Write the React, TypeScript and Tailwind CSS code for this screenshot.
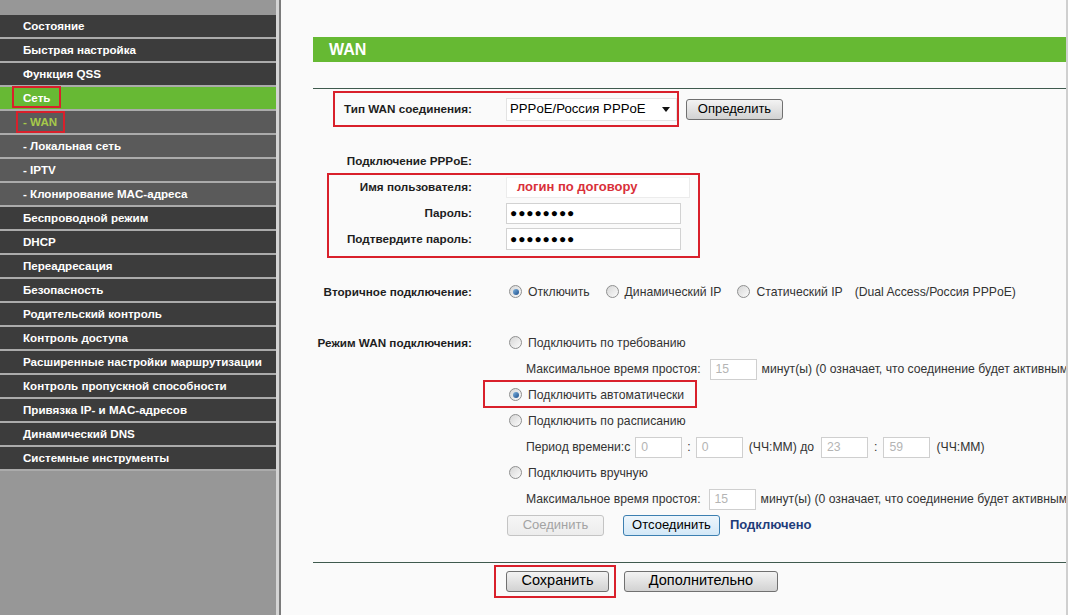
import React from 'react';

type MenuItem = { label: string; kind?: 'active' | 'sub' | 'subActive' };

const menu: MenuItem[] = [
  { label: 'Состояние' },
  { label: 'Быстрая настройка' },
  { label: 'Функция QSS' },
  { label: 'Сеть', kind: 'active' },
  { label: '- WAN', kind: 'subActive' },
  { label: '- Локальная сеть', kind: 'sub' },
  { label: '- IPTV', kind: 'sub' },
  { label: '- Клонирование MAC-адреса', kind: 'sub' },
  { label: 'Беспроводной режим' },
  { label: 'DHCP' },
  { label: 'Переадресация' },
  { label: 'Безопасность' },
  { label: 'Родительский контроль' },
  { label: 'Контроль доступа' },
  { label: 'Расширенные настройки маршрутизации' },
  { label: 'Контроль пропускной способности' },
  { label: 'Привязка IP- и MAC-адресов' },
  { label: 'Динамический DNS' },
  { label: 'Системные инструменты' },
];

function Sidebar() {
  return (
    <div className="w-[276px] shrink-0 bg-[#979797] pt-[15px]">
      {menu.map((m) => {
        const bg =
          m.kind === 'active' ? 'bg-[#67b934]' : m.kind === 'sub' || m.kind === 'subActive' ? 'bg-[#5a5a5a]' : 'bg-[#3c3c3c]';
        const color = m.kind === 'subActive' ? 'text-[#a6c94a]' : 'text-white';
        return (
          <div key={m.label} className="border-b-2 border-[#ababab]">
            <div className={`h-[22px] flex items-center pl-[23px] text-[11.6px] font-bold ${bg} ${color}`}>{m.label}</div>
          </div>
        );
      })}
    </div>
  );
}

function Radio({ checked = false }: { checked?: boolean }) {
  return (
    <span className="w-[13px] h-[13px] rounded-full border border-[#8e8f8f] bg-gradient-to-br from-[#d6d6d6] to-[#fbfbfb] flex items-center justify-center shrink-0">
      {checked && <span className="w-[6px] h-[6px] rounded-full bg-gradient-to-br from-[#7fb4e0] to-[#1d4f8c]" />}
    </span>
  );
}

function RadioLabel({ checked, children }: { checked?: boolean; children: React.ReactNode }) {
  return (
    <span className="flex items-center gap-[6px]">
      <Radio checked={checked} />
      <span>{children}</span>
    </span>
  );
}

function Button({
  children,
  w,
  variant = 'normal',
  size = 'text-[13px]',
}: {
  children: React.ReactNode;
  w: string;
  variant?: 'normal' | 'disabled' | 'focus';
  size?: string;
}) {
  const cls =
    variant === 'disabled'
      ? 'border-[#c4c4c4] text-[#a3a3a3] from-[#f6f6f6] to-[#ececec]'
      : variant === 'focus'
        ? 'border-[#3c7fb1] text-black from-[#eef6fc] to-[#d3e8f7]'
        : 'border-[#707070] text-black from-[#f3f3f3] to-[#d2d2d2]';
  return (
    <span className={`${w} h-[21px] rounded-[3px] border bg-gradient-to-b flex items-center justify-center ${size} ${cls}`}>
      {children}
    </span>
  );
}

function SmallInput({ value, w = 'w-[47px]' }: { value: string; w?: string }) {
  return (
    <span className={`${w} h-[21px] border border-[#cfcfcf] bg-white flex items-center pl-[5px] text-[12.2px] text-[#b4b4b4] shrink-0`}>
      {value}
    </span>
  );
}

function Row({ label, children, className = '' }: { label?: string; children?: React.ReactNode; className?: string }) {
  return (
    <div className={`flex h-[26px] items-center ${className}`}>
      <div className="w-[159px] shrink-0 text-right text-[11.7px] font-bold text-[#1e1e1e]">{label}</div>
      <div className="ml-[34px] flex items-center whitespace-nowrap text-[12.2px] text-[#333]">{children}</div>
    </div>
  );
}

const dots = '●●●●●●●●';

function Main() {
  return (
    <div className="w-[785px] shrink-0 overflow-hidden bg-[#fafafa]">
      <div className="w-[753px] ml-[32px] pt-[37px]">
        <div className="h-[25px] bg-[#66b933] pl-[16px] flex items-center text-white font-bold text-[16px]">WAN</div>
        <div className="mt-[26px] border-t border-[#3f5a4e]" />

        <Row label="Тип WAN соединения:" className="mt-[7px]">
          <span className="w-[171px] h-[23px] border border-[#e3e3e3] bg-white flex items-center justify-between pl-[3px] pr-[6px] text-[13.2px] text-black">
            <span>PPPoE/Россия PPPoE</span>
            <svg width="8" height="5" viewBox="0 0 8 5"><path d="M0 0h8L4 5z" fill="#111" /></svg>
          </span>
          <span className="ml-[9px]">
            <Button w="w-[97px]">Определить</Button>
          </span>
        </Row>

        <Row label="Подключение PPPoE:" className="mt-[26px]" />
        <Row label="Имя пользователя:">
          <span className="w-[184px] h-[21px] border border-[#ececec] border-t-[#f4f4f4] bg-white flex items-center pl-[10px] text-[13px] font-bold text-[#d9303a]">
            логин по договору
          </span>
        </Row>
        <Row label="Пароль:">
          <span className="w-[175px] h-[21px] border border-[#d2d2d2] bg-white flex items-center pl-[3px] text-[12px] tracking-[0.9px] text-black">
            {dots}
          </span>
        </Row>
        <Row label="Подтвердите пароль:">
          <span className="w-[175px] h-[22px] border border-[#d2d2d2] bg-white flex items-center pl-[3px] text-[12px] tracking-[0.9px] text-black">
            {dots}
          </span>
        </Row>

        <Row label="Вторичное подключение:" className="mt-[27px]">
          <span className="ml-[3px] flex items-center gap-[16px]">
            <RadioLabel checked>Отключить</RadioLabel>
            <RadioLabel>Динамический IP</RadioLabel>
            <RadioLabel>Статический IP</RadioLabel>
            <span className="-ml-[4px]">(Dual Access/Россия PPPoE)</span>
          </span>
        </Row>

        <Row label="Режим WAN подключения:" className="mt-[25px]">
          <span className="ml-[3px]">
            <RadioLabel>Подключить по требованию</RadioLabel>
          </span>
        </Row>
        <Row>
          <span className="ml-[20px] flex items-center">
            Максимальное время простоя:
            <span className="ml-[9px]">
              <SmallInput value="15" />
            </span>
            <span className="ml-[5px]">минут(ы) (0 означает, что соединение будет активным всегда)</span>
          </span>
        </Row>
        <Row>
          <span className="ml-[3px]">
            <RadioLabel checked>Подключить автоматически</RadioLabel>
          </span>
        </Row>
        <Row>
          <span className="ml-[3px]">
            <RadioLabel>Подключить по расписанию</RadioLabel>
          </span>
        </Row>
        <Row>
          <span className="ml-[20px] flex items-center">
            Период времени:с
            <span className="ml-[5px]">
              <SmallInput value="0" />
            </span>
            <span className="mx-[5px]">:</span>
            <SmallInput value="0" />
            <span className="ml-[6px]">(ЧЧ:ММ) до</span>
            <span className="ml-[7px]">
              <SmallInput value="23" />
            </span>
            <span className="mx-[6px]">:</span>
            <SmallInput value="59" />
            <span className="ml-[6px]">(ЧЧ:ММ)</span>
          </span>
        </Row>
        <Row>
          <span className="ml-[3px]">
            <RadioLabel>Подключить вручную</RadioLabel>
          </span>
        </Row>
        <Row>
          <span className="ml-[20px] flex items-center">
            Максимальное время простоя:
            <span className="ml-[8px]">
              <SmallInput value="15" />
            </span>
            <span className="ml-[5px]">минут(ы) (0 означает, что соединение будет активным всегда)</span>
          </span>
        </Row>
        <Row>
          <span className="ml-[1px] flex items-center">
            <Button w="w-[97px]" variant="disabled">
              Соединить
            </Button>
            <span className="ml-[19px]">
              <Button w="w-[97px]" variant="focus">
                Отсоединить
              </Button>
            </span>
            <span className="ml-[10px] text-[13px] font-bold text-[#1f3d7a]">Подключено</span>
          </span>
        </Row>

        <div className="mt-[24px] border-t border-[#3f5a4e]" />
        <Row className="mt-[5px]">
          <Button w="w-[103px]" size="text-[14.5px]">
            Сохранить
          </Button>
          <span className="ml-[15px]">
            <Button w="w-[154px]" size="text-[14.5px]">
              Дополнительно
            </Button>
          </span>
        </Row>
      </div>
    </div>
  );
}

function Mark({ className }: { className: string }) {
  return <div className={`absolute border-2 border-[#d9202b] pointer-events-none ${className}`} />;
}

export default function App() {
  return (
    <div className="relative w-[1071px] h-[615px] overflow-hidden flex font-['Liberation_Sans',Arial,sans-serif] bg-white">
      <Sidebar />
      <div className="w-[3px] shrink-0 bg-[#d4d4d4]" />
      <div className="w-[2px] shrink-0 bg-[#7b7b7b]" />
      <Main />
      <div className="w-[2px] shrink-0 bg-[#cfcfcf]" />
      <div className="flex-1 bg-white" />

      <Mark className="left-[12px] top-[86px] w-[49px] h-[22px]" />
      <Mark className="left-[16px] top-[111px] w-[49px] h-[22px]" />
      <Mark className="left-[333px] top-[91px] w-[346px] h-[36px]" />
      <Mark className="left-[327px] top-[173px] w-[373px] h-[85px]" />
      <Mark className="left-[483px] top-[380px] w-[214px] h-[28px]" />
      <Mark className="left-[494px] top-[565px] w-[122px] h-[33px]" />
    </div>
  );
}
